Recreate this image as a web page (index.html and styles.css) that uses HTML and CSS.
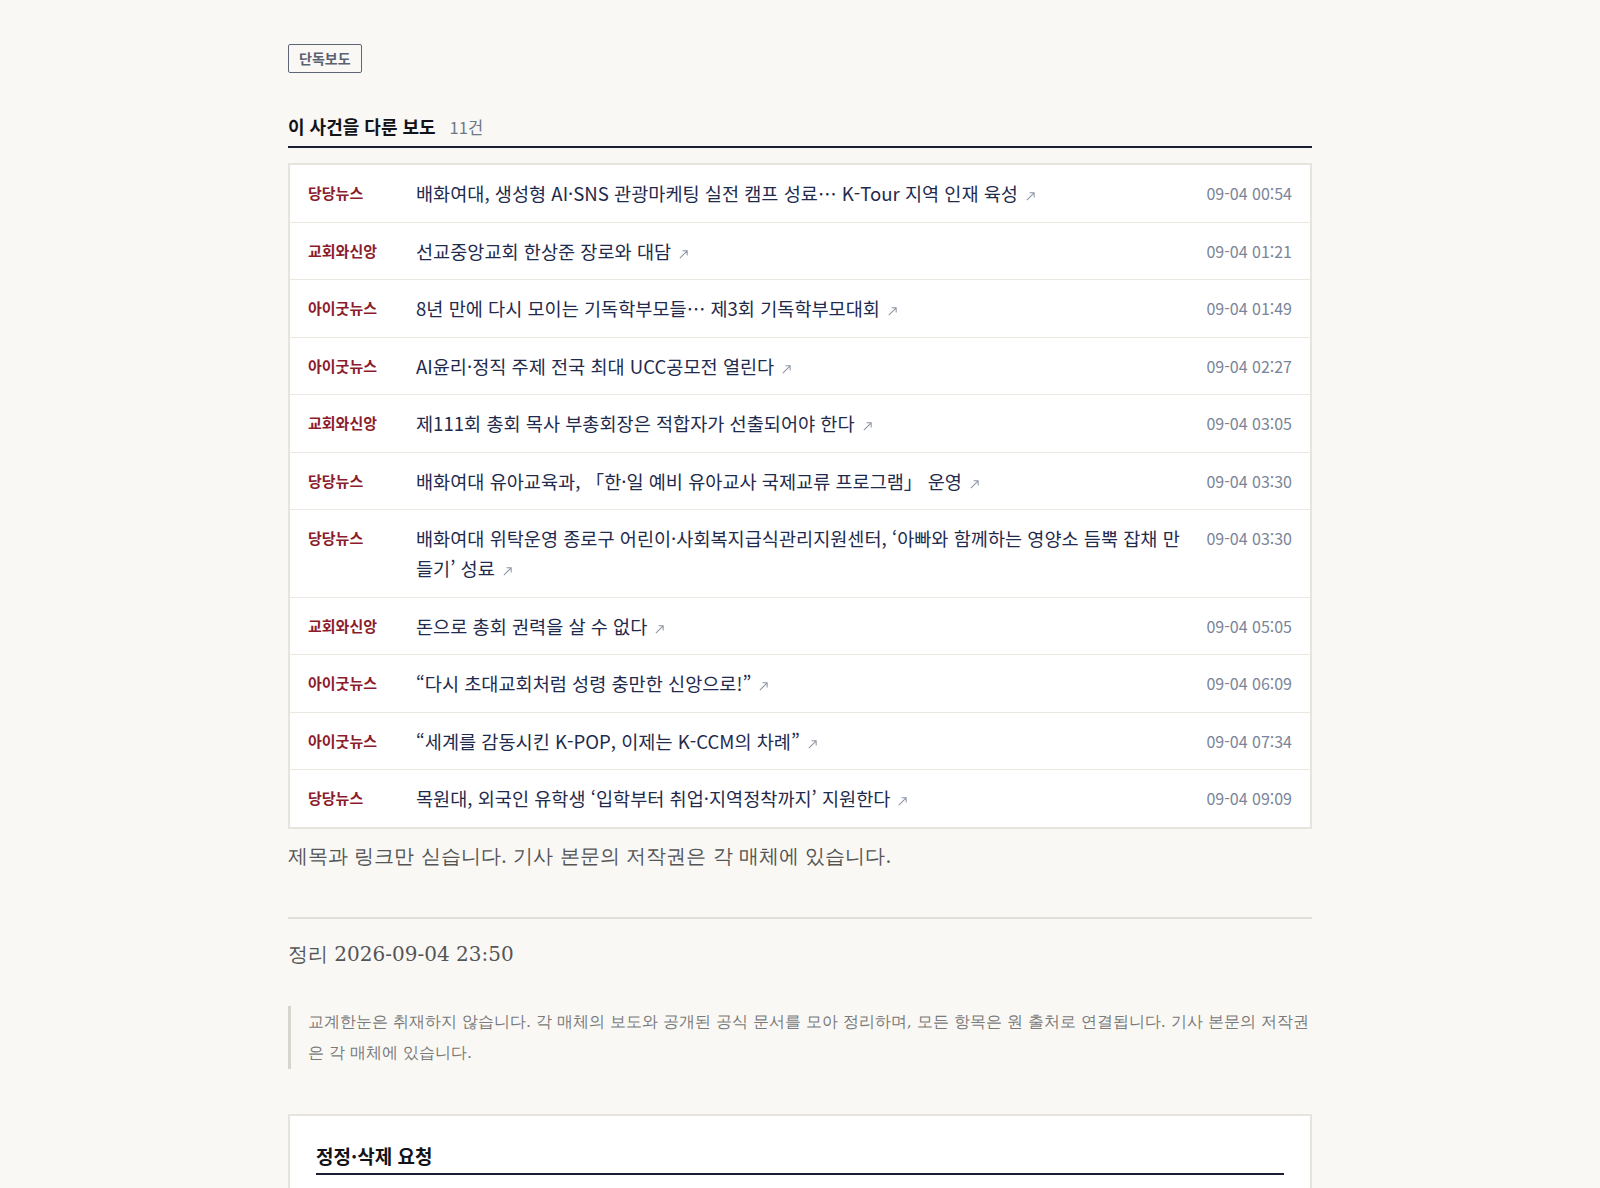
FILE: index.html
```html
<!DOCTYPE html>
<html lang="ko">
<head>
<meta charset="utf-8">
<title>이 사건을 다룬 보도</title>
<link rel="stylesheet" href="styles.css">
</head>
<body>
<main class="page">
  <span class="badge">단독보도</span>

  <section class="coverage">
    <h2 class="section-head"><span class="section-title">이 사건을 다룬 보도</span><span class="section-count">11건</span></h2>
    <ul class="report-list">
      <li class="report"><span class="source">당당뉴스</span><a class="title" href="#">배화여대, 생성형 AI·SNS 관광마케팅 실전 캠프 성료… K-Tour 지역 인재 육성<svg class="ext" viewBox="0 0 12 12"><path d="M2 10L10 2M5 2H10V7"/></svg></a><span class="date">09-04 00:54</span></li>
      <li class="report"><span class="source">교회와신앙</span><a class="title" href="#">선교중앙교회 한상준 장로와 대담<svg class="ext" viewBox="0 0 12 12"><path d="M2 10L10 2M5 2H10V7"/></svg></a><span class="date">09-04 01:21</span></li>
      <li class="report"><span class="source">아이굿뉴스</span><a class="title" href="#">8년 만에 다시 모이는 기독학부모들… 제3회 기독학부모대회<svg class="ext" viewBox="0 0 12 12"><path d="M2 10L10 2M5 2H10V7"/></svg></a><span class="date">09-04 01:49</span></li>
      <li class="report"><span class="source">아이굿뉴스</span><a class="title" href="#">AI윤리·정직 주제 전국 최대 UCC공모전 열린다<svg class="ext" viewBox="0 0 12 12"><path d="M2 10L10 2M5 2H10V7"/></svg></a><span class="date">09-04 02:27</span></li>
      <li class="report"><span class="source">교회와신앙</span><a class="title" href="#">제111회 총회 목사 부총회장은 적합자가 선출되어야 한다<svg class="ext" viewBox="0 0 12 12"><path d="M2 10L10 2M5 2H10V7"/></svg></a><span class="date">09-04 03:05</span></li>
      <li class="report"><span class="source">당당뉴스</span><a class="title" href="#">배화여대 유아교육과, 「한·일 예비 유아교사 국제교류 프로그램」 운영<svg class="ext" viewBox="0 0 12 12"><path d="M2 10L10 2M5 2H10V7"/></svg></a><span class="date">09-04 03:30</span></li>
      <li class="report"><span class="source">당당뉴스</span><a class="title" href="#">배화여대 위탁운영 종로구 어린이·사회복지급식관리지원센터, ‘아빠와 함께하는 영양소 듬뿍 잡채 만들기’ 성료<svg class="ext" viewBox="0 0 12 12"><path d="M2 10L10 2M5 2H10V7"/></svg></a><span class="date">09-04 03:30</span></li>
      <li class="report"><span class="source">교회와신앙</span><a class="title" href="#">돈으로 총회 권력을 살 수 없다<svg class="ext" viewBox="0 0 12 12"><path d="M2 10L10 2M5 2H10V7"/></svg></a><span class="date">09-04 05:05</span></li>
      <li class="report"><span class="source">아이굿뉴스</span><a class="title" href="#">“다시 초대교회처럼 성령 충만한 신앙으로!”<svg class="ext" viewBox="0 0 12 12"><path d="M2 10L10 2M5 2H10V7"/></svg></a><span class="date">09-04 06:09</span></li>
      <li class="report"><span class="source">아이굿뉴스</span><a class="title" href="#">“세계를 감동시킨 K-POP, 이제는 K-CCM의 차례”<svg class="ext" viewBox="0 0 12 12"><path d="M2 10L10 2M5 2H10V7"/></svg></a><span class="date">09-04 07:34</span></li>
      <li class="report"><span class="source">당당뉴스</span><a class="title" href="#">목원대, 외국인 유학생 ‘입학부터 취업·지역정착까지’ 지원한다<svg class="ext" viewBox="0 0 12 12"><path d="M2 10L10 2M5 2H10V7"/></svg></a><span class="date">09-04 09:09</span></li>
    </ul>
    <p class="note">제목과 링크만 싣습니다. 기사 본문의 저작권은 각 매체에 있습니다.</p>
  </section>

  <div class="divider"></div>

  <p class="stamp">정리 2026-09-04 23:50</p>

  <blockquote class="disclaimer">교계한눈은 취재하지 않습니다. 각 매체의 보도와 공개된 공식 문서를 모아 정리하며, 모든 항목은 원 출처로 연결됩니다. 기사 본문의 저작권은 각 매체에 있습니다.</blockquote>

  <section class="card">
    <h3 class="card-head">정정·삭제 요청</h3>
  </section>
</main>
</body>
</html>
```

FILE: styles.css
```css
* { box-sizing: border-box; }

html, body {
  margin: 0;
  padding: 0;
  background: #f9f8f5;
}

body {
  font-family: "Noto Sans CJK KR", sans-serif;
  color: #1f2b4d;
}

.page {
  width: 1024px;
  margin: 0 auto;
  padding-top: 44px;
}

.badge {
  display: inline-block;
  border: 1px solid #5f6777;
  border-radius: 2px;
  padding: 4px 10px;
  font-size: 14px;
  line-height: 19px;
  font-weight: 700;
  color: #5a6272;
}

.coverage {
  margin-top: 40px;
}

.section-head {
  display: flex;
  align-items: baseline;
  gap: 14px;
  margin: 0;
  padding-bottom: 6px;
  border-bottom: 2px solid #1c1f33;
  line-height: 26px;
}

.section-title {
  font-size: 18px;
  font-weight: 700;
  color: #111318;
}

.section-count {
  font-size: 16.5px;
  font-weight: 400;
  color: #6e7788;
}

.report-list {
  list-style: none;
  margin: 15px 0 0;
  padding: 0;
  background: #fff;
  border: 2px solid #e7e4dd;
}

.report {
  display: grid;
  grid-template-columns: 88px 1fr auto;
  column-gap: 20px;
  align-items: start;
  padding: 13.25px 18px;
  border-bottom: 1px solid #ebe8e1;
  line-height: 30px;
}

.report:last-child {
  border-bottom: 0;
}

.source {
  font-size: 15px;
  font-weight: 700;
  color: #8b1c2c;
}

.title {
  font-size: 18.6px;
  color: #1f2b4d;
  text-decoration: none;
}

.ext {
  width: 11px;
  height: 11px;
  margin-left: 7px;
  vertical-align: -1px;
  fill: none;
  stroke: #8a93a3;
  stroke-width: 1.1;
}

.date {
  font-size: 16px;
  color: #7a8599;
  white-space: nowrap;
}

.note {
  margin: 12px 0 0;
  font-family: "DejaVu Serif", serif;
  font-size: 20px;
  line-height: 30px;
  color: #555;
}

.divider {
  margin-top: 46px;
  border-top: 2px solid #e2dfd8;
}

.stamp {
  margin: 20px 0 0;
  font-family: "DejaVu Serif", serif;
  font-size: 20px;
  line-height: 30px;
  color: #555;
}

.disclaimer {
  margin: 37px 0 0;
  padding-left: 17px;
  border-left: 3px solid #d8d5ce;
  font-family: "DejaVu Serif", serif;
  font-size: 15.7px;
  line-height: 31.6px;
  color: #7a7a7a;
}

.card {
  margin-top: 45px;
  background: #fff;
  border: 2px solid #e7e4dd;
  padding: 27px 26px 30px;
}

.card-head {
  margin: 0;
  padding-bottom: 4px;
  border-bottom: 2px solid #1c1f33;
  font-size: 19px;
  line-height: 26px;
  font-weight: 700;
  color: #111318;
}
```
